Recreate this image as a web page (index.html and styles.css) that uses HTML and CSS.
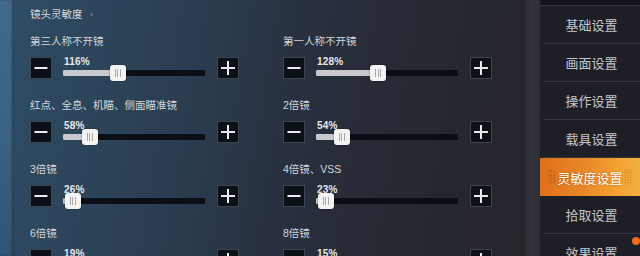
FILE: index.html
```html
<!DOCTYPE html>
<html lang="zh">
<head>
<meta charset="utf-8">
<title>灵敏度设置</title>
<link rel="stylesheet" href="styles.css">
</head>
<body>
<div class="screen">
  <div class="edge"></div>
  <main class="main">
    <div class="section-title">镜头灵敏度<span class="dot"></span></div>
    <div class="grid">
      <div class="item">
        <div class="label">第三人称不开镜</div>
        <div class="controls">
          <div class="btn minus"></div>
          <div class="slider">
            <div class="pct">116%</div>
            <div class="track"><div class="fill" style="width:55px"></div><div class="thumb" style="left:47px"></div></div>
          </div>
          <div class="btn plus"></div>
        </div>
      </div>
      <div class="item">
        <div class="label">第一人称不开镜</div>
        <div class="controls">
          <div class="btn minus"></div>
          <div class="slider">
            <div class="pct">128%</div>
            <div class="track"><div class="fill" style="width:61px"></div><div class="thumb" style="left:54px"></div></div>
          </div>
          <div class="btn plus"></div>
        </div>
      </div>
      <div class="item">
        <div class="label">红点、全息、机瞄、侧面瞄准镜</div>
        <div class="controls">
          <div class="btn minus"></div>
          <div class="slider">
            <div class="pct">58%</div>
            <div class="track"><div class="fill" style="width:27px"></div><div class="thumb" style="left:19px"></div></div>
          </div>
          <div class="btn plus"></div>
        </div>
      </div>
      <div class="item">
        <div class="label">2倍镜</div>
        <div class="controls">
          <div class="btn minus"></div>
          <div class="slider">
            <div class="pct">54%</div>
            <div class="track"><div class="fill" style="width:26px"></div><div class="thumb" style="left:18px"></div></div>
          </div>
          <div class="btn plus"></div>
        </div>
      </div>
      <div class="item">
        <div class="label">3倍镜</div>
        <div class="controls">
          <div class="btn minus"></div>
          <div class="slider">
            <div class="pct">26%</div>
            <div class="track"><div class="fill" style="width:10px"></div><div class="thumb" style="left:2px"></div></div>
          </div>
          <div class="btn plus"></div>
        </div>
      </div>
      <div class="item">
        <div class="label">4倍镜、VSS</div>
        <div class="controls">
          <div class="btn minus"></div>
          <div class="slider">
            <div class="pct">23%</div>
            <div class="track"><div class="fill" style="width:10px"></div><div class="thumb" style="left:2px"></div></div>
          </div>
          <div class="btn plus"></div>
        </div>
      </div>
      <div class="item">
        <div class="label">6倍镜</div>
        <div class="controls">
          <div class="btn minus"></div>
          <div class="slider">
            <div class="pct">19%</div>
            <div class="track"><div class="fill" style="width:9px"></div><div class="thumb" style="left:1px"></div></div>
          </div>
          <div class="btn plus"></div>
        </div>
      </div>
      <div class="item">
        <div class="label">8倍镜</div>
        <div class="controls">
          <div class="btn minus"></div>
          <div class="slider">
            <div class="pct">15%</div>
            <div class="track"><div class="fill" style="width:8px"></div><div class="thumb" style="left:0px"></div></div>
          </div>
          <div class="btn plus"></div>
        </div>
      </div>
    </div>
  </main>
  <div class="divider"></div>
  <nav class="sidebar">
    <div class="nav-top"></div>
    <div class="nav-item">基础设置</div>
    <div class="nav-item">画面设置</div>
    <div class="nav-item">操作设置</div>
    <div class="nav-item">载具设置</div>
    <div class="nav-item active">灵敏度设置</div>
    <div class="nav-item">拾取设置</div>
    <div class="nav-item">效果设置</div>
    <span class="badge"></span>
  </nav>
</div>
</body>
</html>
```
FILE: styles.css
```css
* { box-sizing: border-box; }
html, body { margin: 0; padding: 0; }
body {
  width: 640px;
  height: 256px;
  overflow: hidden;
  background: #24262e;
  font-family: "Liberation Sans", "Noto Sans CJK SC", sans-serif;
}
.screen {
  display: flex;
  width: 640px;
  height: 256px;
  overflow: hidden;
  position: relative;
}
.edge {
  width: 14px;
  flex: none;
  background: linear-gradient(to bottom, #41698a 0%, #3a6282 50%, #2f5572 100%);
  box-shadow: inset -2px 0 2px rgba(20, 35, 50, 0.5);
}
.main {
  flex: 1;
  padding: 6px 0 0 16px;
  background: linear-gradient(100deg, #2e4c63 0%, #2b3f53 30%, #282f3e 55%, #26282f 80%, #25252c 100%);
  overflow: hidden;
  position: relative;
}
.section-title {
  font-size: 10.5px;
  line-height: 16px;
  color: #d4d9de;
  margin-bottom: 11px;
  display: flex;
  align-items: center;
}
.dot {
  width: 3px;
  height: 3px;
  border-radius: 50%;
  background: #5d6f80;
  margin-left: 7px;
}
.grid {
  display: grid;
  grid-template-columns: 253px 1fr;
  row-gap: 18px;
}
.label {
  font-size: 10.5px;
  line-height: 16px;
  color: #d2d7dc;
  margin-bottom: 8px;
  white-space: nowrap;
}
.controls {
  display: flex;
  align-items: flex-start;
  height: 22px;
}
.btn {
  width: 22px;
  height: 22px;
  flex: none;
  background: #0c1017;
  border: 1px solid #3b4652;
  position: relative;
}
.btn::before,
.btn.plus::after {
  content: "";
  position: absolute;
  background: #e8eaec;
  left: 50%;
  top: 50%;
}
.btn.minus::before {
  width: 13px;
  height: 2px;
  transform: translate(-50%, -50%);
}
.btn.plus::before {
  width: 14px;
  height: 2px;
  transform: translate(-50%, -50%);
}
.btn.plus::after {
  width: 2px;
  height: 14px;
  transform: translate(-50%, -50%);
}
.slider {
  width: 142px;
  height: 22px;
  margin: 0 12px 0 11px;
  position: relative;
}
.pct {
  font-size: 10px;
  font-weight: bold;
  line-height: 10px;
  color: #e6e8ea;
  padding-left: 1px;
  letter-spacing: 0.2px;
}
.track {
  position: absolute;
  left: 0;
  right: 0;
  top: 13px;
  height: 6px;
  background: #0b0e14;
  border-radius: 1px;
}
.fill {
  position: absolute;
  left: 0;
  top: 0;
  bottom: 0;
  background: #c7c9cc;
  border-radius: 1px;
}
.thumb {
  position: absolute;
  top: -5px;
  width: 16px;
  height: 16px;
  background: #f3f3f3;
  border-radius: 3px;
  box-shadow: 0 0 2px rgba(0, 0, 0, 0.5);
}
.thumb::after {
  content: "";
  position: absolute;
  left: 5px;
  top: 4px;
  width: 6px;
  height: 8px;
  background: repeating-linear-gradient(to right, #a8a8a8 0 1px, transparent 1px 2.5px);
}
.divider {
  width: 15px;
  flex: none;
  background: linear-gradient(to right, #2b2c35, #32333d 50%, #2c2d36);
}
.sidebar {
  width: 100px;
  flex: none;
  background: #1e1f26;
  display: flex;
  flex-direction: column;
  position: relative;
}
.nav-top {
  height: 6px;
  flex: none;
  background: #15161b;
  border-bottom: 1px solid #33343c;
}
.nav-item {
  height: 38px;
  flex: none;
  display: flex;
  align-items: center;
  justify-content: center;
  font-size: 13px;
  color: #c4c5ca;
  border-bottom: 1px solid #34353d;
  margin-left: 3px;
}
.nav-item.active {
  margin-left: 0;
  border-bottom: none;
  color: #ffffff;
  background: linear-gradient(to right, #de701c 0%, #ea8826 45%, #f3a534 80%, #f1b040 100%);
  text-shadow: 0 0 2px rgba(120, 50, 0, 0.6);
  position: relative;
}
.nav-item.active::before,
.nav-item.active::after {
  content: "";
  position: absolute;
  top: 11px;
  width: 8px;
  height: 16px;
  background: radial-gradient(circle, rgba(150, 70, 10, 0.55) 0.6px, transparent 1px) 0 0 / 2.5px 2.5px;
}
.nav-item.active::before { left: 8px; }
.nav-item.active::after { right: 8px; background: radial-gradient(circle, rgba(200, 120, 20, 0.6) 0.6px, transparent 1px) 0 0 / 2.5px 2.5px; }
.badge {
  position: absolute;
  right: 0;
  top: 237px;
  width: 8px;
  height: 8px;
  border-radius: 50%;
  background: #f06a1e;
}
```
